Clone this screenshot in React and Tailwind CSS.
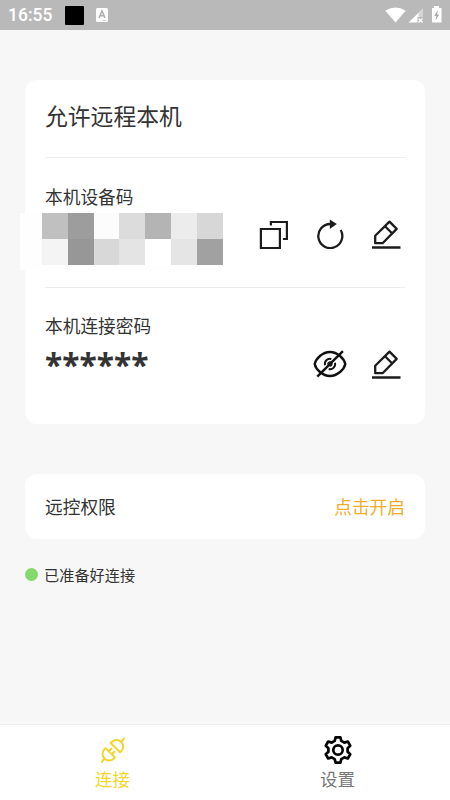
import React, { useState } from "react";

const MOSAIC = [
  ["bg-[#fefefe]", "bg-[#c0c0c0]", "bg-[#9d9d9d]", "bg-[#fcfcfc]", "bg-[#dcdcdc]", "bg-[#b4b4b4]", "bg-[#ececec]", "bg-[#d7d7d7]"],
  ["bg-[#fefefe]", "bg-[#f4f4f4]", "bg-[#979797]", "bg-[#d8d8d8]", "bg-[#e4e4e4]", "bg-white", "bg-[#e5e5e5]", "bg-[#a1a1a1]"],
];

const CopyIcon = () => (
  <svg width="32" height="32" viewBox="0 0 32 32" fill="none" stroke="#1c1c1c" strokeWidth="2.200">
    <path d="M2.900 12h19v19h-19z" />
    <path d="M12.900 8.500V5h16v17h-4" />
  </svg>
);

const RefreshIcon = () => (
  <svg width="32" height="32" viewBox="0 0 32 32" fill="none" stroke="#1c1c1c" strokeWidth="2.300">
    <path d="M26.700 13A12 12 0 1 1 16.300 7" />
    <path d="M15.800 2.500L22.800 7l-7 5z" fill="#1c1c1c" stroke="none" />
  </svg>
);

const EditIcon = () => (
  <svg width="32" height="32" viewBox="0 0 32 32" fill="none" stroke="#1c1c1c" strokeWidth="2.300" strokeLinejoin="round">
    <path d="M5.200 26.200v-7.500L19.500 4.600l7.200 7.300L12.600 26.200z" />
    <path d="M15 9.200l7 7M2 30.500h28.500" />
  </svg>
);

const EyeOffIcon = () => (
  <svg width="36" height="32" viewBox="0 0 36 32" fill="none" stroke="#111" strokeWidth="2.400">
    <path d="M2.700 17C3.800 11.600 10.500 5 18 5s14.200 6.600 15.300 12C32.200 22.400 25.500 29 18 29S3.800 22.400 2.700 17z" />
    <path d="M13 18.200A5.100 5.100 0 0 1 19.300 12M23 15.800A5.100 5.100 0 0 1 16.700 22" strokeWidth="1.900" />
    <path d="M16 17.500a2 2 0 0 1 3.800-1.200 2 2 0 0 1-2.200 2.600" strokeWidth="1.500" />
    <path d="M5.300 29.700L30.900 4.200" strokeWidth="2.400" />
  </svg>
);

const PlugIcon = () => (
  <svg width="28" height="28" viewBox="0 0 28 28" fill="none" stroke="#f1d52f" strokeWidth="2" strokeLinecap="round" strokeLinejoin="round">
    <path d="M11.700 7l9.300 9.300 1.300-1.300a6.580 6.580 0 0 0-9.300-9.300z" />
    <path d="M6.600 12.100l9.300 9.300-1.300 1.300a6.580 6.580 0 0 1-9.300-9.300z" />
    <path d="M22.300 5.700l2.900-3.300M5.300 22.700l-2.400 3.300M9.800 15.300l2.600-2.600M12.800 18.300l2.600-2.600" />
  </svg>
);

const GearIcon = () => (
  <svg width="30" height="30" viewBox="0 0 30 30" fill="none" stroke="#050505" strokeWidth="2.700" strokeLinejoin="round">
    <path d="M12.600 2.300h4.800l.9 3.600 3 1.700 3.500-1.100 2.400 4.200-2.600 2.500v3.600l2.600 2.500-2.400 4.200-3.500-1.100-3 1.700-.9 3.600h-4.800l-.9-3.600-3-1.700-3.500 1.100-2.400-4.200 2.600-2.500v-3.600l-2.600-2.500 2.400-4.200 3.500 1.100 3-1.700z" />
    <circle cx="15" cy="15" r="4.700" />
  </svg>
);

const StatusBar = () => (
  <div className="flex h-[30px] items-center bg-[#b9b9b9] px-2">
    <span className="w-[57px] font-['Roboto'] text-[17.500px] font-medium leading-[32px] text-white">16:55</span>
    <div className="h-[19px] w-[19px] rounded-[1px] bg-black" />
    <svg className="ml-[12px]" width="12" height="14" viewBox="0 0 12 14">
      <rect width="12" height="14" rx="1.500" fill="#fff" />
      <path d="M3 10l3-7 3 7M4.200 7.800h3.600" fill="none" stroke="#b0b0b0" strokeWidth="1.500" />
      <path d="M6.500 12.500h4" stroke="#d0d0d0" />
    </svg>
    <svg className="ml-auto" width="58" height="20" viewBox="0 0 58 20">
      <path d="M1.300 5.800Q11.500-.8 21.700 5.800L11.500 17.500z" fill="#fff" />
      <path d="M24.500 17.500L39 3.500V12h-5.500v5.500z" fill="#fff" />
      <path d="M34.500 8L39 3.500V12h-4.500z" fill="#d5d5d5" />
      <path d="M34.500 13.500l4 4m0-4l-4 4" stroke="#fff" strokeWidth="1.400" />
      <path d="M50 1h5v2h2.500v14.500h-9.500V3H50z" fill="#fff" />
      <path d="M54 5l-3.800 6h2.200l-1 4.500 3.800-6H53z" fill="#a8a8a8" />
    </svg>
  </div>
);

const App = () => {
  const [tab, setTab] = useState("connect");

  return (
    <div className="flex h-[800px] w-[450px] flex-col overflow-hidden bg-[#f7f7f7] font-['Noto_Sans_CJK_SC',sans-serif] text-[#333]">
      <StatusBar />

      <main className="flex-1 px-[25px] pt-[50px]">
        {/* Device code and password */}
        <section className="h-[344px] rounded-[12px] bg-white px-5">
          <h1 className="h-[77px] pt-[19px] text-[22.800px] leading-[34px]">允许远程本机</h1>

          <div className="h-[130px] border-t border-[#ededed] pt-[25px]">
            <h2 className="h-[30px] text-[17.700px] leading-[26px]">本机设备码</h2>
            <div className="flex items-start">
              <div className="-ml-[25px] h-[57px] w-[202.500px] bg-[#fefefe]">
                {MOSAIC.map((row, i) => (
                  <div key={i} className="grid h-[26px] grid-cols-[22px_repeat(7,1fr)]">
                    {row.map((shade, j) => <div key={j} className={shade} />)}
                  </div>
                ))}
              </div>
              <div className="ml-auto flex gap-[24px] pr-[3px] pt-[4px]">
                <button><CopyIcon /></button>
                <button><RefreshIcon /></button>
                <button><EditIcon /></button>
              </div>
            </div>
          </div>

          <div className="border-t border-[#ededed] pt-[25px]">
            <h2 className="h-[30px] text-[17.700px] leading-[24px]">本机连接密码</h2>
            <div className="flex items-start">
              <span className="h-[40px] font-['Noto_Sans'] text-[31.800px] font-bold leading-[44px]">******</span>
              <div className="ml-auto flex gap-[22px] pr-[3px] pt-[4px]">
                <button><EyeOffIcon /></button>
                <button><EditIcon /></button>
              </div>
            </div>
          </div>
        </section>

        {/* Remote control permission */}
        <section className="mt-[50px] flex h-[65px] items-center justify-between rounded-[12px] bg-white px-5 text-[17.700px]">
          <span>远控权限</span>
          <button className="text-[#f0ad2b]">点击开启</button>
        </section>

        <div className="mt-[23px] flex items-center gap-[6px] text-[15.200px] leading-6">
          <span className="h-[13px] w-[13px] rounded-full bg-[#85d96c]" />
          <span>已准备好连接</span>
        </div>
      </main>

      <nav className="grid h-[76px] grid-cols-2 border-t border-[#eee] bg-white text-[17.500px] leading-[26px]">
        <button className="flex flex-col items-center pt-[11px] text-[#f3d62b]" onClick={() => setTab("connect")} aria-pressed={tab === "connect"}>
          <PlugIcon />
          <span className="mt-[2px]">连接</span>
        </button>
        <button className="flex flex-col items-center pt-[10px] text-[#777]" onClick={() => setTab("settings")} aria-pressed={tab === "settings"}>
          <GearIcon />
          <span className="mt-[1px]">设置</span>
        </button>
      </nav>
    </div>
  );
};

export default App;
